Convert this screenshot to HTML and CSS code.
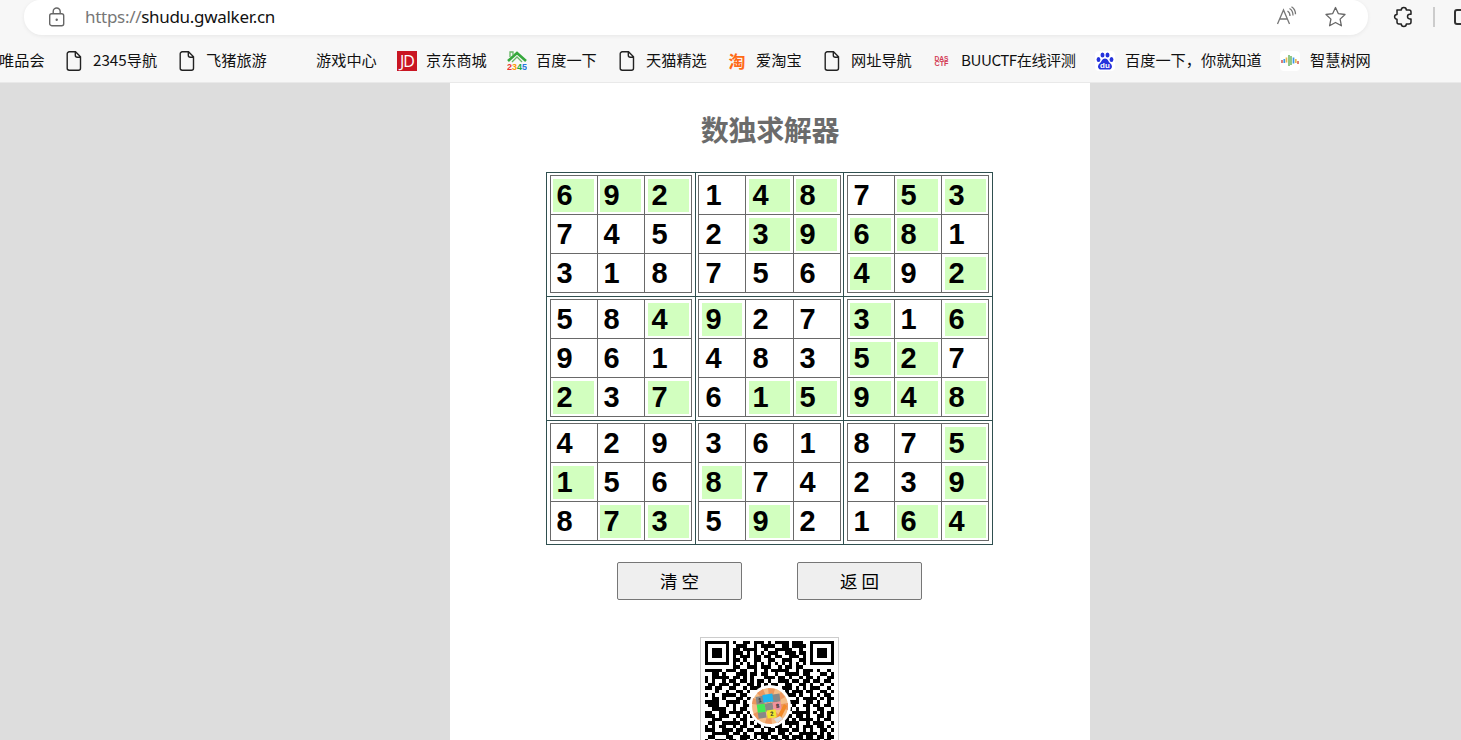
FILE: index.html
```html
<!DOCTYPE html>
<html lang="zh-CN">
<head>
<meta charset="utf-8">
<title>数独求解器</title>
<link rel="stylesheet" href="styles.css">
</head>
<body>
<svg class="defs" width="0" height="0">
  <symbol id="file" viewBox="0 0 20 20"><path d="M5.200.8h6.300l5 5v11.400a2 2 0 0 1-2 2H5.200a2 2 0 0 1-2-2V2.800a2 2 0 0 1 2-2zM11.300.8v3.400a2 2 0 0 0 2 2h3.200" fill="none" stroke="#222" stroke-width="1.400"/></symbol>
</svg>
<header class="chrome">
  <div class="toolbar">
    <div class="address">
      <svg class="lock" width="18" height="22" viewBox="0 0 18 22" fill="none" stroke="#666" stroke-width="1.400"><rect x="1.700" y="6.700" width="14" height="12" rx="2"/><path d="M5.200 6.700V4.500a3.500 3.500 0 0 1 7 0v2.200"/><circle cx="8.700" cy="12.700" r="1.200" fill="#666" stroke="none"/></svg>
      <span class="url"><span class="scheme">https://</span>shudu.gwalker.cn</span>
      <svg class="read" width="22" height="20" viewBox="0 0 22 20" fill="none" stroke="#777" stroke-width="1.300"><path d="M1.500 18 7.500 4l6 14M3.700 13h7.600M11.500 5q2.500 1.500 2.500 5M13.500 2.500q3.500 2 3.500 7M15.500 0.700q4 2.500 4 7.500"/></svg>
      <svg class="star" width="22" height="22" viewBox="0 0 22 22" fill="none" stroke="#666" stroke-width="1.300" stroke-linejoin="round"><path d="m11.500 1.500 2.900 6.200 6.600.8-4.900 4.600 1.300 6.700-5.900-3.300-5.900 3.300 1.300-6.700L2 8.500l6.600-.8z"/></svg>
    </div>
    <svg class="puzzle" width="22" height="22" viewBox="0 0 22 22" fill="none" stroke="#222" stroke-width="1.500" stroke-linejoin="round"><path d="M4 4h4.300a2.500 2.500 0 0 1 5 0H16a2 2 0 0 1 2 2v2.300h-1.200a2.300 2.300 0 0 0 0 4.600H18V16a2 2 0 0 1-2 2h-2.700a2.500 2.500 0 0 1-5 0H6a2 2 0 0 1-2-2v-2.800a2.400 2.400 0 0 1 0-4.800z"/></svg>
    <span class="divider"></span>
    <span class="panel"></span>
  </div>
  <nav class="bookmarks">
    <div class="mark first"><span>唯品会</span></div>
    <div class="mark w113"><svg class="icon"><use href="#file"/></svg><span>2345导航</span></div>
    <div class="mark"><svg class="icon"><use href="#file"/></svg><span>飞猪旅游</span></div>
    <div class="mark"><i class="icon"></i><span>游戏中心</span></div>
    <div class="mark"><i class="icon jd">JD</i><span>京东商城</span></div>
    <div class="mark"><svg class="icon" viewBox="0 0 20 20"><path d="M1 10 10 2l9 8" fill="none" stroke="#36a83c" stroke-width="2.600"/><path d="M3 6V1h3v3M5 11l5-5 5 5" fill="none" stroke="#66b765" stroke-width="1.300"/><g class="digits"><text x="0" y="19" fill="#e33">2</text><text x="5" y="19" fill="#f90">3</text><text x="10" y="19" fill="#2a3">4</text><text x="15" y="19" fill="#27d">5</text></g></svg><span>百度一下</span></div>
    <div class="mark"><svg class="icon"><use href="#file"/></svg><span>天猫精选</span></div>
    <div class="mark w95"><i class="icon tao">淘</i><span>爱淘宝</span></div>
    <div class="mark"><svg class="icon"><use href="#file"/></svg><span>网址导航</span></div>
    <div class="mark w163"><svg class="icon" viewBox="0 0 20 20"><g class="das" fill="#d33b55"><text x="2.500" y="10" textLength="14" lengthAdjust="spacingAndGlyphs">DAS</text><text x="2.500" y="15" textLength="14" lengthAdjust="spacingAndGlyphs">CTF</text></g></svg><span class="buu">BUUCTF在线评测</span></div>
    <div class="mark w185"><svg class="icon tile" viewBox="0 0 20 20" fill="#2432dc"><ellipse cx="3.500" cy="8.500" rx="1.900" ry="2.500"/><ellipse cx="7.500" cy="4" rx="2" ry="2.600"/><ellipse cx="12.500" cy="4" rx="2" ry="2.600"/><ellipse cx="16.500" cy="8.500" rx="1.900" ry="2.500"/><path d="M10 7.500c3 0 3 3 5.500 5 3 3 1 6.500-2 6h-7c-3 .5-5-3-2-6C7 10.500 7 7.500 10 7.500z"/><text class="du" x="5" y="16.500" fill="#fff">du</text></svg><span class="late">百度一下，你就知道</span></div>
    <div class="mark"><svg class="icon tile" viewBox="0 0 20 20" fill="none" stroke-width="1.700"><path d="M2 9v3M18 10v3" stroke="#d76963"/><path d="M4.300 8v4M13.500 6.500v6" stroke="#3d99e8"/><path d="M6.500 6.500v5M15.800 8v4" stroke="#e9b94f"/><path d="M9 4v11M11 5v9" stroke="#7cbd73"/></svg><span class="late">智慧树网</span></div>
  </nav>
</header>
<main class="page">
  <h1>数独求解器</h1>
  <div class="sudoku" id="sudoku"></div>
  <div class="actions"><button>清 空</button><button>返 回</button></div>
  <div class="qr">
    <svg id="qr" width="129" height="129" viewBox="0 0 37 37" shape-rendering="crispEdges"></svg>
    <svg class="badge" width="42" height="42" viewBox="0 0 42 42">
      <circle cx="21" cy="21" r="21" fill="#fff"/><circle cx="21" cy="21" r="18" fill="#f4bd87"/>
      <path d="M21 21 3 19l1-6zM21 21 8 8l6-4zM21 21 19 3l7 1zM21 21 32 7l4 5zM21 21l18-3v7zM21 21l13 13-5 4zM21 21l2 18-7-1zM21 21 9 35l-5-6z" fill="#ec975e"/>
      <g transform="rotate(-8 21 21)"><path d="M8 10h8v8H8zM16 18h8v8h-8zM24 10h8v8h-8zM8 26h8v6H8z" fill="#888"/><path d="M15 9h10v8H15z" fill="#20b5ee"/><path d="M8 18h8v8H8z" fill="#43e858"/><path d="M24 18h8v8h-8z" fill="#ef92a0"/><path d="M17 25h9v8h-9z" fill="#f1e62f"/><g class="tiny"><text x="10" y="16">1</text><text x="27" y="24">8</text><text x="20" y="31">2</text></g></g>
      <path d="m27 34 8-15 3 2-7 14z" fill="#f28a27"/><path d="m25 34 6-3 3 3-6 4z" fill="#ddd"/>
    </svg>
  </div>
</main>
<script src="app.js"></script>
</body>
</html>
```
FILE: styles.css
```css
* { box-sizing: border-box; }
body { margin: 0; height: 740px; overflow: hidden; background: #ddd; font-family: "Noto Sans CJK SC", sans-serif; }
.defs { position: absolute; }
.chrome { height: 83px; background: #f7f7f7; border-bottom: 1px solid #e9e9e9; overflow: hidden; }
.toolbar { display: flex; height: 35px; }
.address { display: flex; flex: none; width: 1344px; height: 35px; margin-left: 24px; padding-left: 24px; background: #fff; border-radius: 16px 16px 18px 18px; box-shadow: 0 1px 4px #0001; }
.lock { flex: none; margin-top: 7px; }
.url { flex: none; width: 1191px; margin-left: 19px; font: 17px/33px "Noto Sans", sans-serif; letter-spacing: -.3px; color: #111; }
.scheme { color: #777; }
.read { flex: none; margin-top: 6px; }
.star { flex: none; margin: 6px 0 0 26px; }
.puzzle { flex: none; margin: 6px 0 0 25px; }
.divider { flex: none; width: 2px; height: 20px; margin: 7px 0 0 18px; background: #ccc; }
.panel { flex: none; width: 20px; height: 16px; margin: 9px 0 0 19px; border: 2px solid #333; border-radius: 3px; }
.bookmarks { display: flex; height: 47px; padding-top: 14px; overflow: hidden; }
.mark { flex: none; display: flex; width: 110px; height: 24px; align-items: center; font-size: 15.2px; line-height: 24px; color: #111; white-space: nowrap; }
.mark span { margin-left: 9px; margin-top: -4px; }
.mark .late { margin-left: 10px; }
.mark .buu { letter-spacing: -.5px; }
.mark.first { width: 64px; }
.mark.first span { margin-left: -1px; }
.mark.w113 { width: 113px; }
.mark.w95 { width: 95px; }
.mark.w163 { width: 163px; }
.mark.w185 { width: 185px; }
.icon { flex: none; width: 20px; height: 20px; font-style: normal; }
.jd { background: #c91623; color: #fff; font: 16px/21px "Open Sans", sans-serif; letter-spacing: -1px; text-align: center; }
.tao { color: #ff6a16; font-size: 17px; line-height: 19px; font-weight: 700; text-align: center; }
.tile { background: #fff; border-radius: 4px; }
.digits { font: bold 9px "Liberation Sans", sans-serif; }
.das { font: bold 6.5px "Liberation Sans", sans-serif; }
.du { font: bold 8px "Liberation Sans", sans-serif; }
.tiny { font: bold 6px "Liberation Sans", sans-serif; fill: #333; }
.page { display: flex; flex-direction: column; align-items: center; width: 640px; height: 657px; margin-left: 450px; background: #fff; overflow: hidden; }
h1 { margin: 26px 0 0; font-size: 28px; line-height: 40px; color: #6b6b6b; letter-spacing: -.3px; }
.sudoku { display: grid; flex: none; grid-template-columns: 148px 147px 148px; grid-template-rows: repeat(3, 123px); gap: 1px; width: 447px; height: 373px; margin: 23px 1px 0 0; padding: 1px; background: #2f4f4f; }
.box { background: #fff; padding: 2px 0 0 3px; }
.box.mid { padding-left: 2px; }
.cells { display: grid; grid-template-columns: 46px 46px 46px; grid-template-rows: repeat(3, 38px); gap: 1px; width: 142px; padding: 1px; background: #696969; }
.mid .cells { grid-template-columns: 46px 47px 46px; width: 143px; }
.cell { padding: 3px 3px 2px 2px; background: #fff; }
.cell:nth-child(3n) { padding-left: 3px; padding-right: 2px; }
.mid .cell { padding-left: 3px; }
.mid .cell:nth-child(3n) { padding-left: 2px; padding-right: 3px; }
.cell span { display: block; height: 33px; padding-left: 3.4px; font: bold 29px/32px "Liberation Sans", sans-serif; color: #000; }
.given span { background: #d2ffbf; }
.actions { display: flex; flex: none; gap: 55px; margin: 17px 1px 0 0; }
button { width: 125px; height: 38px; padding: 0 0 2px; font: 17.5px "Noto Sans CJK SC", sans-serif; background: #efefef; border: 1px solid #767676; border-radius: 2px; color: #000; }
.qr { position: relative; flex: none; width: 139px; height: 139px; margin: 37px 1px 0 0; padding: 3px 4px; border: 1px solid #ccc; }
.qr > svg { display: block; }
.badge { position: absolute; left: 48px; top: 47px; }
```
FILE: app.js
```js
// Rows of the solved grid; an asterisk marks a given digit.
const rows = [
  '6*9*2*1 4*8*7 5*3*', '7 4 5 2 3*9*6*8*1 ', '3 1 8 7 5 6 4*9 2*',
  '5 8 4*9*2 7 3*1 6*', '9 6 1 4 8 3 5*2*7 ', '2*3 7*6 1*5*9*4*8*',
  '4 2 9 3 6 1 8 7 5*', '1*5 6 8*7 4 2 3 9*', '8 7*3*5 9*2 1 6*4*'
];
const board = document.getElementById('sudoku');
for (let b = 0; b < 9; b++) {
  const box = document.createElement('div');
  box.className = b % 3 === 1 ? 'box mid' : 'box';
  let html = '<div class="cells">';
  for (let i = 0; i < 9; i++) {
    const row = rows[Math.floor(b / 3) * 3 + Math.floor(i / 3)];
    const col = ((b % 3) * 3 + i % 3) * 2;
    html += `<div class="cell${row[col + 1] === '*' ? ' given' : ''}"><span>${row[col]}</span></div>`;
  }
  box.innerHTML = html + '</div>';
  board.append(box);
}

const modules = [
  '1111111010011011101011110111001111111',
  '1000001001110010111100110111101000001',
  '1011101011011110010011111001001011101',
  '1011101011101010101110011101101011101',
  '1011101010111011011011001110101011101',
  '1000001011010011001100111001101000001',
  '1111111010101010101010101010101111111',
  '0000000011001110111001011011000000000',
  '1111101110110010010111110010111010010',
  '0011010001110110110010011110110001101',
  '1011111011010100011101101001011010011',
  '1010010110110101101001110110110110110',
  '0110111011001101010110011001101001001',
  '1101100110010111000000111010101110010',
  '0001001001101000000000010111011001101',
  '1010011110110010000000011101001010110',
  '0011010001101100000000010010111101011',
  '1111001111010000000000001110011010010',
  '0111001010011000000000010100110110110',
  '0011110010110100000000011010010011001',
  '1100110111101000000000000111110101011',
  '1110111001010100000000011011010011010',
  '0011100010110010000000110101111010110',
  '0110011111010101000001011110010111001',
  '1010110010110011011011001010111011010',
  '1110011101101100101101110110101001101',
  '0011111011010011111001101001111101010',
  '0110001100111010110110110111011011011',
  '1001110110110101011011011101111110110'
];
let d = '';
modules.forEach((row, y) => [...row].forEach((v, x) => {
  if (v === '1') d += `M${x} ${y}h1v1h-1z`;
}));
document.getElementById('qr').innerHTML = `<path d="${d}"/>`;
```
